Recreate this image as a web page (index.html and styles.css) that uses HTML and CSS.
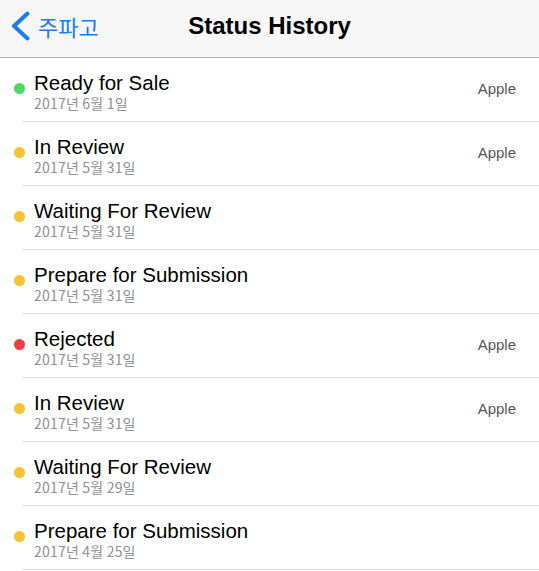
FILE: index.html
```html
<!DOCTYPE html>
<html>
<head>
<meta charset="utf-8">
<link rel="stylesheet" href="styles.css">
</head>
<body>
<div class="nav">
  <div class="back">
    <svg class="chev" width="22" height="30" viewBox="0 0 22 30"><path d="M17.5 2.5 L4 15 L17.5 27.5" fill="none" stroke="#1a7cf5" stroke-width="4" stroke-linecap="round" stroke-linejoin="round"/></svg>
    <span class="back-label">주파고</span>
  </div>
  <div class="title">Status History</div>
</div>
<ul class="list">
  <li class="row"><span class="dot green"></span><div class="cell"><div class="texts"><div class="status">Ready for Sale</div><div class="date">2017년 6월 1일</div></div><div class="who">Apple</div></div></li>
  <li class="row"><span class="dot yellow"></span><div class="cell"><div class="texts"><div class="status">In Review</div><div class="date">2017년 5월 31일</div></div><div class="who">Apple</div></div></li>
  <li class="row"><span class="dot yellow"></span><div class="cell"><div class="texts"><div class="status">Waiting For Review</div><div class="date">2017년 5월 31일</div></div><div class="who"></div></div></li>
  <li class="row"><span class="dot yellow"></span><div class="cell"><div class="texts"><div class="status">Prepare for Submission</div><div class="date">2017년 5월 31일</div></div><div class="who"></div></div></li>
  <li class="row"><span class="dot red"></span><div class="cell"><div class="texts"><div class="status">Rejected</div><div class="date">2017년 5월 31일</div></div><div class="who">Apple</div></div></li>
  <li class="row"><span class="dot yellow"></span><div class="cell"><div class="texts"><div class="status">In Review</div><div class="date">2017년 5월 31일</div></div><div class="who">Apple</div></div></li>
  <li class="row"><span class="dot yellow"></span><div class="cell"><div class="texts"><div class="status">Waiting For Review</div><div class="date">2017년 5월 29일</div></div><div class="who"></div></div></li>
  <li class="row"><span class="dot yellow"></span><div class="cell"><div class="texts"><div class="status">Prepare for Submission</div><div class="date">2017년 4월 25일</div></div><div class="who"></div></div></li>
</ul>
</body>
</html>
```
FILE: styles.css
```css
html, body { margin: 0; padding: 0; background: #fff; }
body { font-family: "Liberation Sans", "Noto Sans CJK KR", sans-serif; overflow: hidden; }
.nav {
  height: 57px;
  background: #f7f7f7;
  border-bottom: 1px solid #b2b2b2;
  display: flex;
  align-items: center;
  justify-content: center;
  position: relative;
}
.back {
  position: absolute;
  left: 10px;
  top: 11px;
  display: flex;
  align-items: center;
  gap: 6px;
}
.chev { display: block; }
.back-label {
  color: #1a7cf5;
  font-family: "Noto Sans CJK KR", sans-serif;
  font-size: 22px;
  line-height: 30px;
}
.title {
  font-weight: bold;
  font-size: 24px;
  color: #000;
  padding-bottom: 5px;
}
.list { list-style: none; margin: 0; padding: 0; }
.row {
  display: flex;
  align-items: stretch;
  height: 64px;
}
.dot {
  flex: none;
  width: 11px;
  height: 11px;
  border-radius: 50%;
  margin: 25px 8px 0 14px;
}
.green { background: #4cd964; }
.yellow { background: #f8c22e; }
.red { background: #f53d3d; }
.cell {
  flex: 1;
  display: flex;
  align-items: flex-start;
  border-bottom: 1px solid #dcdcdc;
  margin-left: -11px;
  padding-left: 11px;
}
.texts { flex: 1; padding-top: 13px; padding-left: 1px; }
.status {
  font-size: 20.5px;
  line-height: 24px;
  color: #000;
}
.date {
  font-family: "Noto Sans CJK KR", sans-serif;
  font-size: 14px;
  line-height: 16px;
  color: #8e8e93;
  letter-spacing: 0.2px;
}
.who {
  font-size: 15px;
  color: #555;
  padding-top: 22px;
  padding-right: 23px;
}
```
